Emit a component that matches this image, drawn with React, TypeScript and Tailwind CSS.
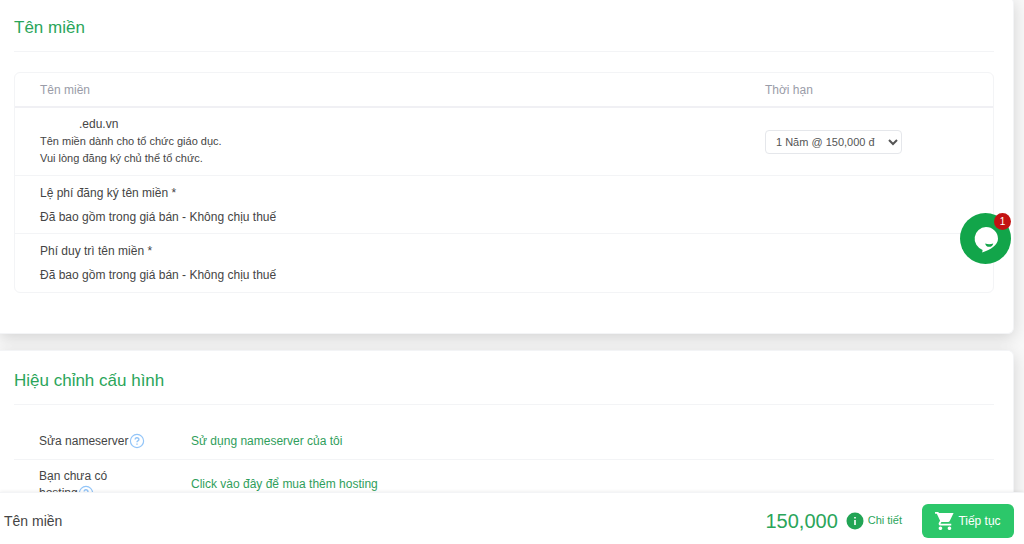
import type { ReactNode } from "react";

const fees = ["Lệ phí đăng ký tên miền *", "Phí duy trì tên miền *"];

const HelpIcon = () => (
  <svg
    viewBox="0 0 16 16"
    className="inline-block size-4 shrink-0 align-middle"
    fill="none"
    aria-hidden="true"
  >
    <circle cx="8" cy="8" r="6.6" stroke="#93c5f8" strokeWidth="1.2" />
    <path
      d="M6.1 6.4a1.9 1.7 0 1 1 2.8 1.5c-.7.4-.9.7-.9 1.4M8 10.4v1.3"
      stroke="#93c5f8"
      strokeWidth="1.4"
    />
  </svg>
);

const InfoIcon = () => (
  <svg viewBox="0 0 18 18" className="size-[18px]" aria-hidden="true">
    <circle cx="9" cy="9" r="8.5" fill="#22a455" />
    <path d="M8.2 5h1.6v1.6H8.2zM8.2 8h1.6v5H8.2z" fill="#fff" />
  </svg>
);

const CartIcon = () => (
  <svg
    viewBox="1 2 21 20"
    className="h-[18px] w-[19px]"
    fill="currentColor"
    aria-hidden="true"
  >
    <path d="M7 18c-1.1 0-1.99.9-1.99 2S5.900 22 7 22s2-.9 2-2-.9-2-2-2zM1 2v2h2l3.6 7.59-1.35 2.45c-.16.28-.25.61-.25.96 0 1.1.9 2 2 2h12v-2H7.42c-.14 0-.25-.11-.25-.25l.03-.12.9-1.63h7.45c.75 0 1.41-.41 1.75-1.03l4.300-8.970H5.210l-.94-2H1zm16 16c-1.1 0-1.99.9-1.99 2s.89 2 1.99 2 2-.9 2-2-.9-2-2-2z" />
  </svg>
);

const ChatIcon = () => (
  <svg viewBox="0 0 26 28" className="h-7 w-[26px]" aria-hidden="true">
    <path
      d="M13 2a12 11.8 0 0 1 12 11.8c0 6.2-7 10.7-15.800 13.700l.4-2.600A12 11.8 0 0 1 13 2z"
      fill="#fff"
    />
    <path d="M12.2 18.4q4 1.600 8 0-.6 3.400-4 3.400t-4-3.400z" fill="#12a54a" />
  </svg>
);

interface CardProps {
  title: string;
  children: ReactNode;
}

const Card = ({ title, children }: CardProps) => (
  <section className="rounded-r-md border border-l-0 border-gray-100 bg-white pt-[18px] pr-[19px] pl-[14px] shadow-[0_4px_16px_rgba(0,0,0,0.15)]">
    <h2 className="border-b border-gray-100 pb-[11px] text-[17px] leading-6 text-[#2aa55a]">
      {title}
    </h2>
    {children}
  </section>
);

const DomainTable = () => (
  <div className="mt-5 mb-10 rounded-md border border-gray-100">
    <table className="w-full table-fixed text-left text-xs">
      <thead>
        <tr className="border-b-2 border-[#f0f0f4] text-[#9a9ca8]">
          <th className="h-[34px] pl-[25px] font-normal">Tên miền</th>
          <th className="w-[228px] font-normal">Thời hạn</th>
        </tr>
      </thead>
      <tbody>
        <tr className="border-b border-gray-100">
          <td className="py-2 pl-[25px]">
            <p className="pl-[39px] leading-[17px]">.edu.vn</p>
            <p className="text-[11px] leading-[17px]">
              Tên miền dành cho tổ chức giáo dục.
            </p>
            <p className="text-[11px] leading-[17px]">
              Vui lòng đăng ký chủ thể tổ chức.
            </p>
          </td>
          <td>
            <select
              aria-label="Thời hạn"
              className="h-6 w-[137px] rounded border border-gray-200 bg-white pl-[6px] text-[11px] text-[#555]"
            >
              <option>1 Năm @ 150,000 đ</option>
            </select>
          </td>
        </tr>
        {fees.map((fee) => (
          <tr key={fee} className="border-b border-gray-100 last:border-b-0">
            <td colSpan={2} className="h-[58px] pl-[25px] leading-6">
              <p>{fee}</p>
              <p>Đã bao gồm trong giá bán - Không chịu thuế</p>
            </td>
          </tr>
        ))}
      </tbody>
    </table>
  </div>
);

const Settings = () => (
  <dl className="mt-[19px] text-xs leading-[17px]">
    <div className="flex h-9 items-center border-b border-gray-100 pl-[25px]">
      <dt className="flex w-[152px] items-center gap-px">
        Sửa nameserver
        <HelpIcon />
      </dt>
      <dd>
        <a href="#nameserver" className="text-[#2f9e5b]">
          Sử dụng nameserver của tôi
        </a>
      </dd>
    </div>
    <div className="flex items-center py-2 pl-[25px]">
      <dt className="w-[152px] pr-14">
        Bạn chưa có hosting
        <HelpIcon />
      </dt>
      <dd>
        <a href="#hosting" className="text-[#2f9e5b]">
          Click vào đây để mua thêm hosting
        </a>
      </dd>
    </div>
  </dl>
);

const CheckoutBar = () => (
  <footer className="z-10 flex h-[52px] shrink-0 items-center border-t border-gray-100 bg-white pt-1 pr-[10px] pl-1 shadow-[0_-1px_3px_rgba(0,0,0,0.06)]">
    <span className="text-sm">Tên miền</span>
    <span className="mr-2 ml-auto text-xl text-[#2aa55a]">150,000</span>
    <a
      href="#details"
      className="mr-5 flex items-center gap-1 text-[11px] text-[#2aa55a]"
    >
      <InfoIcon />
      Chi tiết
    </a>
    <button className="flex h-[34px] w-[92px] items-center justify-center gap-1 rounded-md bg-[#2cc76a] text-xs text-white">
      <CartIcon />
      Tiếp tục
    </button>
  </footer>
);

const ChatButton = () => (
  <button
    aria-label="Chat"
    className="fixed top-[213px] right-[13px] z-20 flex size-[51px] items-center justify-center rounded-full bg-[#12a54a]"
  >
    <ChatIcon />
    <span className="absolute top-0 right-0 flex size-[17px] items-center justify-center rounded-full bg-[#c31212] text-[10px] text-white">
      1
    </span>
  </button>
);

const App = () => {
  return (
    <div className="flex h-screen flex-col bg-[#f8f8f8] font-['Liberation_Sans',Arial,sans-serif] text-[#454545]">
      <main className="-mt-[3px] flex-1 space-y-4 overflow-y-auto pr-[10px] [scrollbar-width:none]">
        <Card title="Tên miền">
          <DomainTable />
        </Card>
        <Card title="Hiệu chỉnh cấu hình">
          <Settings />
        </Card>
      </main>
      <CheckoutBar />
      <ChatButton />
    </div>
  );
};

export default App;
